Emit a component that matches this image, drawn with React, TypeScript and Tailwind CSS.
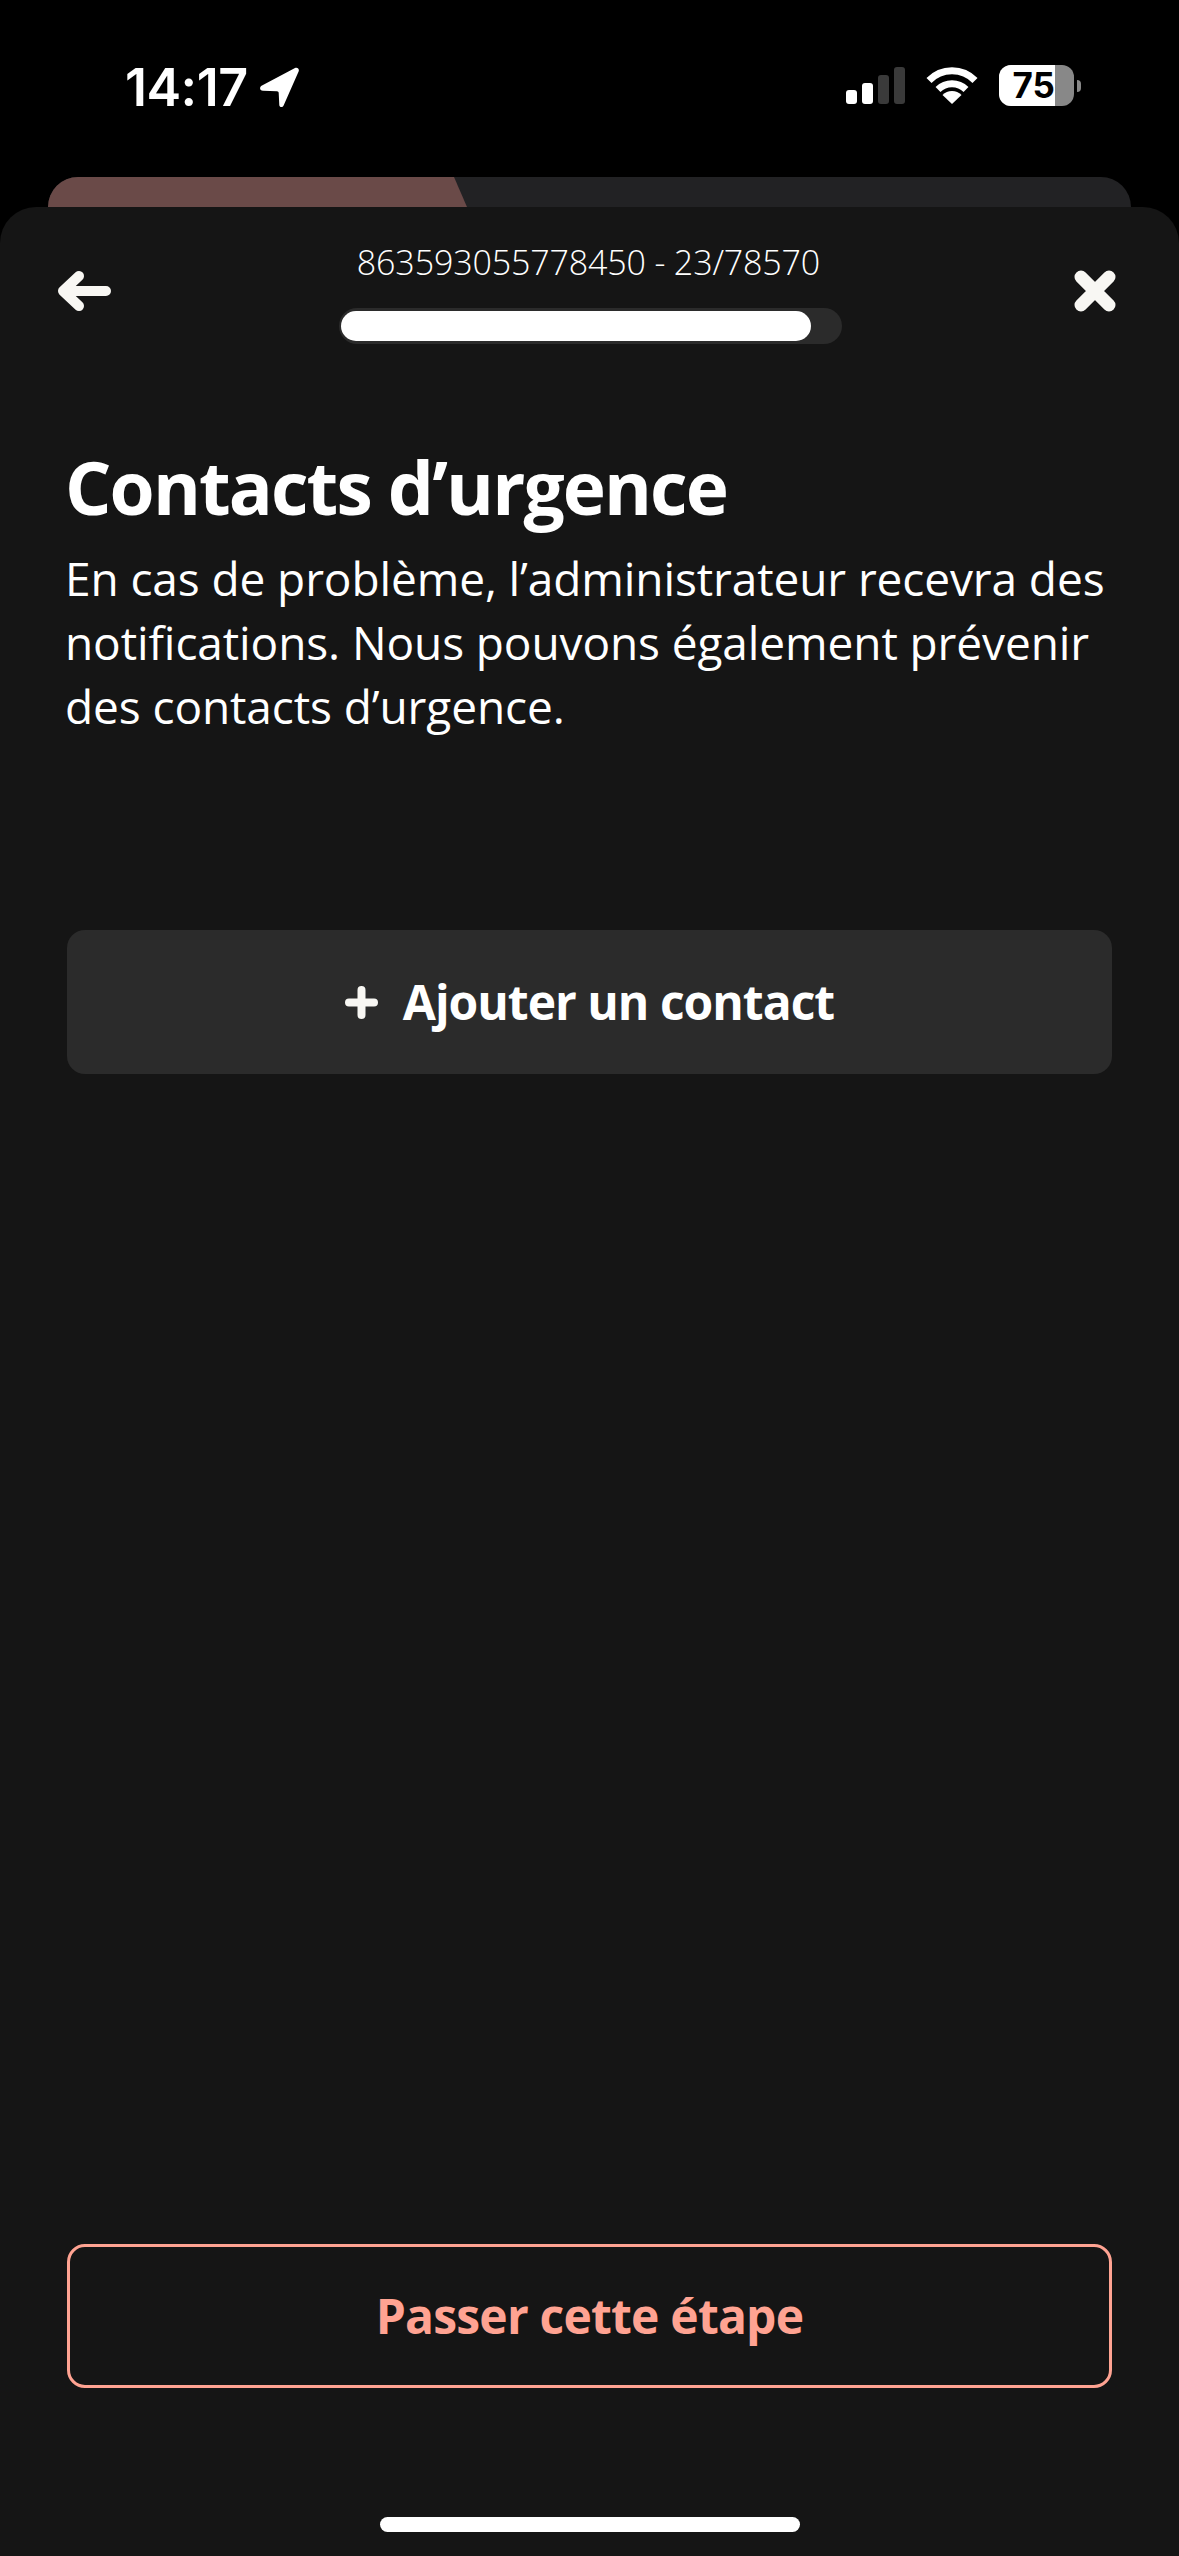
export default function App() {
  return (
    <div className="flex h-[2556px] w-[1179px] flex-col overflow-hidden bg-black text-white [font-family:'Open_Sans','Liberation_Sans',sans-serif]">
      {/* Status bar */}
      <div className="flex h-[177px] shrink-0 items-start justify-between pl-[125px] pr-[98px] pt-[58px]">
        <div className="flex items-center gap-[11px]">
          <span className="text-[52px] font-semibold leading-[60px] tracking-[-0.5px] [font-family:'Inter',sans-serif]">14:17</span>
          <svg width="40" height="40" viewBox="0 0 40 40" className="mt-[-2px]">
            <path d="M36 1 3 18.5c-3 1.6-2.4 5 1 5.2l14 .6c1 0 1.7.7 1.7 1.7l.6 12c.2 2.6 3.3 2.8 4.3.6L39.6 4.5C40.6 1.8 38.5 0 36 1Z" fill="#fff" />
          </svg>
        </div>
        <div className="flex items-start gap-[21px] pt-[9px]">
          <div className="flex items-end gap-[5px]">
            <div className="h-[14px] w-[11px] rounded-[3px] bg-white" />
            <div className="h-[21px] w-[11px] rounded-[3px] bg-white" />
            <div className="h-[29px] w-[11px] rounded-[3px] bg-[#3a3a3a]" />
            <div className="h-[37px] w-[11px] rounded-[3px] bg-[#3a3a3a]" />
          </div>
          <svg width="52" height="37" viewBox="0 0 52 37">
            <path d="M3 13.5a32 32 0 0 1 46 0" fill="none" stroke="#fff" strokeWidth="7" />
            <path d="M12 22.5a20 20 0 0 1 28 0" fill="none" stroke="#fff" strokeWidth="7" />
            <path d="M26 37 16.5 28a13.5 13.5 0 0 1 19 0Z" fill="#fff" />
          </svg>
          <div className="mt-[-2px] flex items-center gap-[3px]">
            <div className="relative flex h-[41px] w-[75px] overflow-hidden rounded-[12px] bg-[#888888]">
              <div className="flex h-full w-[56px] items-center justify-end bg-white">
                <span className="text-[35px] font-bold leading-[41px] text-black [font-family:'Inter',sans-serif]">75</span>
              </div>
            </div>
            <div className="h-[12px] w-[4px] rounded-r-[4px] bg-[#888888]" />
          </div>
        </div>
      </div>

      {/* Card behind the sheet */}
      <div className="mx-[48px] h-[30px] shrink-0 overflow-hidden rounded-t-[30px] bg-[#222224]">
        <div className="h-full w-[419px] bg-[#6a4a48] [clip-path:polygon(0_0,406px_0,419px_30px,0_30px)]" />
      </div>

      {/* Sheet */}
      <div className="flex min-h-0 flex-1 flex-col rounded-t-[36px] bg-[#151515] px-[67px]">
        <div className="relative mx-[-9px] flex h-[150px] shrink-0 items-start justify-between pt-[64px]">
          <svg width="53" height="40" viewBox="0 0 53 40" fill="none" stroke="#f8f7f3" strokeWidth="10" strokeLinecap="round" strokeLinejoin="round">
            <path d="M48 20H6M21 5 5 20l16 15" />
          </svg>
          <div className="absolute left-[281px] top-[33px] flex flex-col items-center gap-[24px]">
            <span className="ml-[-4px] whitespace-nowrap text-[34px] font-light leading-[44px] tracking-[-0.15px]">863593055778450 - 23/78570</span>
            <div className="flex h-[36px] w-[503px] items-center rounded-full bg-[#2b2b2b] px-[2px]">
              <div className="h-[30px] w-[470px] rounded-full bg-white" />
            </div>
          </div>
          <svg width="42" height="42" viewBox="0 0 42 42" fill="none" stroke="#f8f7f3" strokeWidth="13" strokeLinecap="round" className="mr-[5px] mt-[-1px]">
            <path d="M7 7l28 28M35 7 7 35" />
          </svg>
        </div>

        <h1 className="ml-[-2px] mt-[88px] text-[73px] font-bold leading-[84px] tracking-[-1.9px]">Contacts d’urgence</h1>
        <p className="ml-[-2px] mt-[17px] text-[46px] font-normal leading-[64px] tracking-[-0.1px]">
          En cas de problème, l’administrateur recevra des notifications. Nous pouvons également prévenir des contacts d’urgence.
        </p>

        <button className="mt-[192px] flex h-[144px] shrink-0 items-center justify-center gap-[25px] rounded-[18px] bg-[#2b2b2b] text-[48px] font-bold tracking-[-1px]">
          <svg width="33" height="33" viewBox="0 0 33 33" fill="none" stroke="#f8f7f3" strokeWidth="8" strokeLinecap="round">
            <path d="M16.5 4v25M4 16.5h25" />
          </svg>
          <span>Ajouter un contact</span>
        </button>

        <button className="mt-auto flex h-[144px] shrink-0 items-center justify-center rounded-[18px] border-[3px] border-[#ffa392] text-[48px] font-bold tracking-[-0.8px] text-[#ffa392]">
          Passer cette étape
        </button>

        <div className="mx-auto mb-[24px] mt-[129px] h-[15px] w-[420px] shrink-0 rounded-full bg-white" />
      </div>
    </div>
  );
}
